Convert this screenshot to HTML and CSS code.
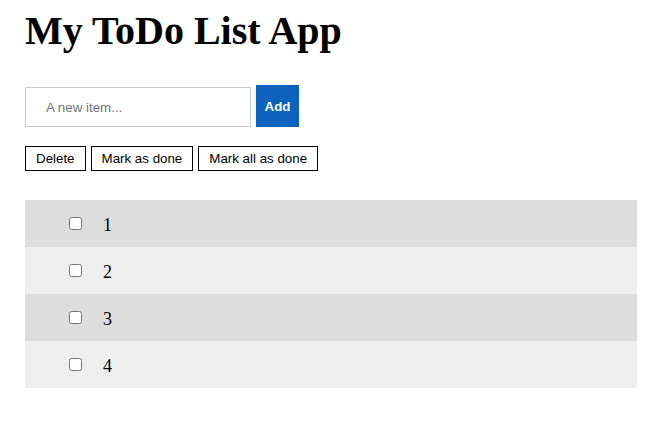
FILE: index.html
```html
<!DOCTYPE html>
<html>
<head>
<meta charset="utf-8">
<title>My ToDo List App</title>
<link rel="stylesheet" href="styles.css">
</head>
<body>
<div class="app">
  <h1 class="title">My ToDo List App</h1>
  <form class="add-form">
    <input class="new-item" type="text" placeholder="A new item...">
    <button class="add-btn" type="button">Add</button>
  </form>
  <div class="actions">
    <button class="action" type="button">Delete</button>
    <button class="action" type="button">Mark as done</button>
    <button class="action" type="button">Mark all as done</button>
  </div>
  <ul class="list">
    <li class="item"><input class="check" type="checkbox"><span class="label">1</span></li>
    <li class="item"><input class="check" type="checkbox"><span class="label">2</span></li>
    <li class="item"><input class="check" type="checkbox"><span class="label">3</span></li>
    <li class="item"><input class="check" type="checkbox"><span class="label">4</span></li>
  </ul>
</div>
</body>
</html>
```
FILE: styles.css
```css
html, body {
  margin: 0;
  padding: 0;
  background: #fff;
}
.app {
  padding: 8px 35px 0 25px;
  font-family: "Liberation Serif", serif;
}
.title {
  margin: 0;
  font-size: 40px;
  line-height: 46px;
  font-weight: bold;
  color: #000;
}
.add-form {
  display: flex;
  align-items: flex-end;
  gap: 5px;
  margin-top: 31px;
}
.new-item {
  box-sizing: border-box;
  width: 226px;
  height: 40px;
  margin: 0;
  padding: 0 20px;
  border: 1px solid #ccc;
  font-family: "Liberation Sans", Arial, sans-serif;
  font-size: 13.333px;
  color: #000;
  outline: none;
}
.new-item::placeholder {
  color: #757575;
}
.add-btn {
  box-sizing: border-box;
  height: 42px;
  width: 43px;
  margin: 0;
  padding: 0;
  border: none;
  background: #0b63be;
  color: #fff;
  font-family: "Liberation Sans", Arial, sans-serif;
  font-size: 13.333px;
  font-weight: bold;
}
.actions {
  display: flex;
  gap: 5px;
  margin-top: 19px;
}
.action {
  box-sizing: border-box;
  height: 25px;
  margin: 0;
  padding: 0 10px;
  border: 1px solid #000;
  background: #fff;
  color: #000;
  font-family: "Liberation Sans", Arial, sans-serif;
  font-size: 13.333px;
}
.list {
  list-style: none;
  margin: 29px 0 0;
  padding: 0;
}
.item {
  display: flex;
  align-items: center;
  height: 47px;
  padding-left: 40px;
  background: #eee;
}
.item:nth-child(odd) {
  background: #ddd;
}
.check {
  width: 13px;
  height: 13px;
  margin: 0 3px 0 4px;
}
.label {
  margin-left: 18px;
  padding-top: 3px;
  font-size: 18px;
  color: #000;
}
```
